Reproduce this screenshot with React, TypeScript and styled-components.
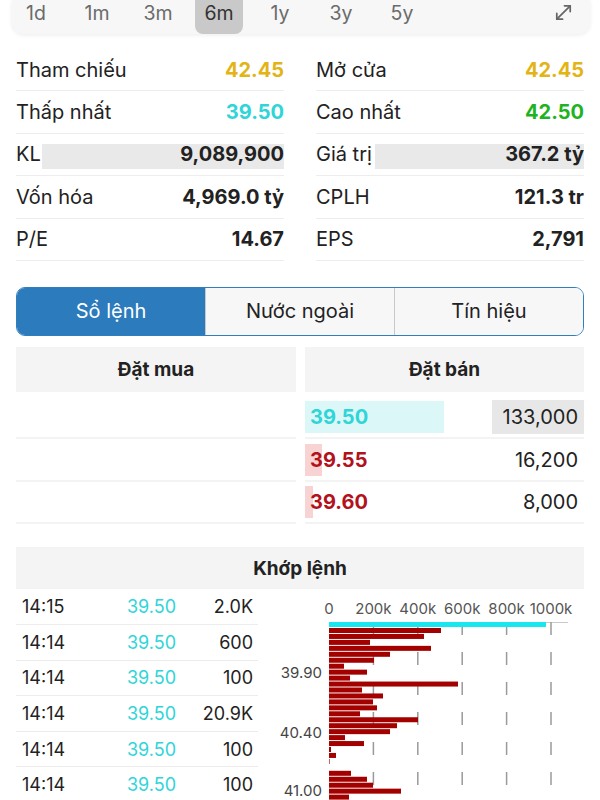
import styled, { createGlobalStyle } from "styled-components";
import { MoveDiagonal } from "lucide-react";

const GlobalStyle = createGlobalStyle`
    body {
        margin: 0;
        background: #fff;
        font-family: Inter, "Noto Sans", sans-serif;
        color: #222;
    }
`;

// colours used across the page
const YELLOW = "#e3b416";
const CYAN = "#2fd5d8";
const GREEN = "#1fb31f";
const RED = "#b3111b";

const Page = styled.div`
    width: 600px;
    height: 800px;
    overflow: hidden;
    background: #fff;
`;

// period selector
const PeriodBar = styled.div`
    display: flex;
    align-items: center;
    gap: 13px;
    height: 34px;
    margin: 0 10px 0 12px;
    background: #f7f7f7;
    border-radius: 0 0 12px 12px;
    box-shadow: 0 1px 4px rgba(0, 0, 0, 0.08);
`;

const Period = styled.div<{ $active?: boolean }>`
    width: 48px;
    height: 34px;
    box-sizing: border-box;
    padding-bottom: 8px;
    display: flex;
    align-items: center;
    justify-content: center;
    font-size: 19.5px;
    color: ${(p) => (p.$active ? "#333" : "#6b6b6b")};
    background: ${(p) => (p.$active ? "#c9c9c9" : "transparent")};
    border-radius: 0 0 8px 8px;
`;

const ExpandButton = styled.div`
    margin-left: auto;
    margin-right: 15px;
    margin-bottom: 9px;
    display: flex;
    color: #666;
`;

// stats
const StatsGrid = styled.div`
    display: grid;
    grid-template-columns: 1fr 1fr;
    column-gap: 32px;
    margin: 15px 16px 0;
`;

const StatColumn = styled.div`
    display: flex;
    flex-direction: column;
`;

const StatRow = styled.div`
    position: relative;
    display: flex;
    align-items: center;
    justify-content: space-between;
    height: 42.4px;
    box-sizing: border-box;
    border-bottom: 1px solid #ededed;
    font-size: 20px;
`;

const StatFill = styled.div`
    position: absolute;
    right: 0;
    top: 10px;
    height: 25px;
    background: #e9e9e9;
`;

const StatLabel = styled.span`
    position: relative;
    color: #222;
`;

const StatValue = styled.span<{ $color?: string }>`
    position: relative;
    font-weight: 700;
    color: ${(p) => p.$color || "#222"};
`;

// segmented tabs
const Tabs = styled.div`
    display: flex;
    height: 49px;
    margin: 26px 16px 0;
    border: 1.5px solid #2f7fbf;
    border-radius: 9px;
    overflow: hidden;
    box-sizing: border-box;
`;

const Tab = styled.div<{ $active?: boolean }>`
    flex: 1;
    display: flex;
    align-items: center;
    justify-content: center;
    font-size: 20px;
    color: ${(p) => (p.$active ? "#fff" : "#222")};
    background: ${(p) => (p.$active ? "#2b7bbd" : "#f7f7f8")};
    & + & {
        border-left: 1px solid #c9c9c9;
    }
`;

// order book
const Book = styled.div`
    display: grid;
    grid-template-columns: 280px 279px;
    column-gap: 9px;
    margin: 11px 16px 0;
`;

const BookSide = styled.div`
    display: flex;
    flex-direction: column;
`;

const SectionHeader = styled.div`
    height: 45px;
    display: flex;
    align-items: center;
    justify-content: center;
    background: #f4f4f4;
    font-size: 19px;
    font-weight: 700;
    color: #222;
`;

const BookRows = styled.div`
    margin-top: 5px;
`;

const BookRow = styled.div`
    height: 42.5px;
    box-sizing: border-box;
    display: flex;
    align-items: center;
    justify-content: space-between;
    border-bottom: 2px solid #f3f3f3;
`;

const PriceCell = styled.div<{ $color: string }>`
    position: relative;
    height: 32px;
    display: flex;
    align-items: center;
    padding-left: 5px;
    font-size: 20px;
    font-weight: 700;
    color: ${(p) => p.$color};
`;

const PriceFill = styled.div<{ $bg: string }>`
    position: absolute;
    left: 0;
    top: 0;
    bottom: 0;
    background: ${(p) => p.$bg};
`;

const PriceText = styled.span`
    position: relative;
`;

const VolumeCell = styled.div<{ $highlight?: boolean }>`
    height: 34px;
    display: flex;
    align-items: center;
    padding: 0 6px 0 11px;
    font-size: 20px;
    color: #222;
    background: ${(p) => (p.$highlight ? "#e7e7e7" : "transparent")};
`;

// matched trades
const MatchHeader = styled(SectionHeader)`
    height: 42px;
    margin: 23px 16px 0;
`;

const MatchBody = styled.div`
    display: flex;
    align-items: flex-start;
`;

const TradeList = styled.div`
    width: 242px;
    margin-left: 16px;
`;

const TradeRow = styled.div`
    display: grid;
    grid-template-columns: 105px 1fr auto;
    align-items: center;
    height: 35.6px;
    box-sizing: border-box;
    padding: 0 5px 0 6px;
    border-bottom: 1px solid #ececec;
    font-size: 18px;
    color: #222;
`;

const TradePrice = styled.span`
    color: ${CYAN};
`;

const ChartSvg = styled.svg`
    display: block;
    margin-left: 12px;
    flex-shrink: 0;
`;

const leftStats = [
    { label: "Tham chiếu", value: "42.45", color: YELLOW },
    { label: "Thấp nhất", value: "39.50", color: CYAN },
    { label: "KL", value: "9,089,900", fill: 242 },
    { label: "Vốn hóa", value: "4,969.0 tỷ" },
    { label: "P/E", value: "14.67" },
];

const rightStats = [
    { label: "Mở cửa", value: "42.45", color: YELLOW },
    { label: "Cao nhất", value: "42.50", color: GREEN },
    { label: "Giá trị", value: "367.2 tỷ", fill: 209 },
    { label: "CPLH", value: "121.3 tr" },
    { label: "EPS", value: "2,791" },
];

const asks = [
    { price: "39.50", volume: "133,000", color: CYAN, bg: "#dcf7f7", fill: 139, highlight: true },
    { price: "39.55", volume: "16,200", color: RED, bg: "#f8d3d3", fill: 17 },
    { price: "39.60", volume: "8,000", color: RED, bg: "#f8d3d3", fill: 8 },
];

const trades = [
    ["14:15", "39.50", "2.0K"],
    ["14:14", "39.50", "600"],
    ["14:14", "39.50", "100"],
    ["14:14", "39.50", "20.9K"],
    ["14:14", "39.50", "100"],
    ["14:14", "39.50", "100"],
];

// bar lengths in px, one per price step under the cyan match bar
const redBars = [
    112, 95, 41, 102, 61, 45, 15, 38, 21, 129, 33, 54, 44, 48, 31, 89, 68, 61, 16, 35, 2, 7, 0.6, 0, 22,
    38, 44, 72, 20, 31,
];

function VolumeChart() {
    const x0 = 59;
    const step = 44.4;
    const ticks = ["0", "200k", "400k", "600k", "800k", "1000k"];
    return (
        <ChartSvg width={330} height={212} viewBox="0 0 330 212">
            {ticks.map((t, i) => (
                <text
                    key={t}
                    x={x0 + i * step}
                    y={25}
                    textAnchor="middle"
                    fontSize={15}
                    fill="#555"
                    fontFamily="Inter, sans-serif"
                >
                    {t}
                </text>
            ))}
            <line x1={x0} y1={33.5} x2={298} y2={33.5} stroke="#c8c8c8" strokeWidth={1} />
            {ticks.slice(1).map((t, i) => (
                <line
                    key={t}
                    x1={x0 + (i + 1) * step}
                    y1={33}
                    x2={x0 + (i + 1) * step}
                    y2={212}
                    stroke="#9a9a9a"
                    strokeWidth={1.5}
                    strokeDasharray="13 17"
                />
            ))}
            <rect x={x0} y={33} width={217} height={5} fill="#19e6ef" />
            {redBars.map((w, i) =>
                w > 0 ? <rect key={i} x={x0} y={39 + i * 5.95} width={w} height={5} fill="#a30000" /> : null
            )}
            {[
                ["39.90", 89],
                ["40.40", 149],
                ["41.00", 207],
            ].map(([t, y]) => (
                <text
                    key={t}
                    x={52}
                    y={y}
                    textAnchor="end"
                    fontSize={15}
                    fill="#444"
                    fontFamily="Inter, sans-serif"
                >
                    {t}
                </text>
            ))}
        </ChartSvg>
    );
}

export default function App() {
    return (
        <Page>
            <GlobalStyle />
            <PeriodBar>
                {["1d", "1m", "3m", "6m", "1y", "3y", "5y"].map((p) => (
                    <Period key={p} $active={p === "6m"}>
                        {p}
                    </Period>
                ))}
                <ExpandButton>
                    <MoveDiagonal size={23} strokeWidth={1.8} />
                </ExpandButton>
            </PeriodBar>

            <StatsGrid>
                {[leftStats, rightStats].map((col, ci) => (
                    <StatColumn key={ci}>
                        {col.map((s) => (
                            <StatRow key={s.label}>
                                {s.fill && <StatFill style={{ width: s.fill }} />}
                                <StatLabel>{s.label}</StatLabel>
                                <StatValue $color={s.color}>{s.value}</StatValue>
                            </StatRow>
                        ))}
                    </StatColumn>
                ))}
            </StatsGrid>

            <Tabs>
                <Tab $active>Sổ lệnh</Tab>
                <Tab>Nước ngoài</Tab>
                <Tab>Tín hiệu</Tab>
            </Tabs>

            <Book>
                <BookSide>
                    <SectionHeader>Đặt mua</SectionHeader>
                    <BookRows>
                        {asks.map((a) => (
                            <BookRow key={a.price} />
                        ))}
                    </BookRows>
                </BookSide>
                <BookSide>
                    <SectionHeader>Đặt bán</SectionHeader>
                    <BookRows>
                        {asks.map((a) => (
                            <BookRow key={a.price}>
                                <PriceCell $color={a.color}>
                                    <PriceFill $bg={a.bg} style={{ width: a.fill }} />
                                    <PriceText>{a.price}</PriceText>
                                </PriceCell>
                                <VolumeCell $highlight={a.highlight}>{a.volume}</VolumeCell>
                            </BookRow>
                        ))}
                    </BookRows>
                </BookSide>
            </Book>

            <MatchHeader>Khớp lệnh</MatchHeader>
            <MatchBody>
                <TradeList>
                    {trades.map(([time, price, vol], i) => (
                        <TradeRow key={i}>
                            <span>{time}</span>
                            <TradePrice>{price}</TradePrice>
                            <span>{vol}</span>
                        </TradeRow>
                    ))}
                </TradeList>
                <VolumeChart />
            </MatchBody>
        </Page>
    );
}
